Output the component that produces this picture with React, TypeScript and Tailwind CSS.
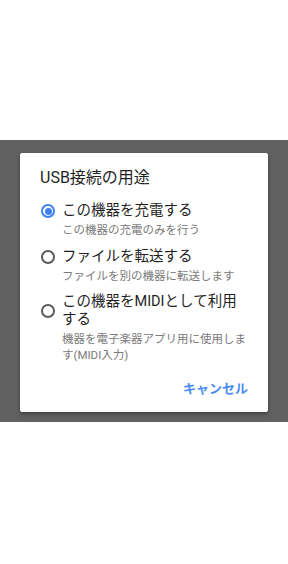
import React from "react";

function Radio({ checked }: { checked?: boolean }) {
  return (
    <div
      className={
        "w-[14px] h-[14px] shrink-0 rounded-full border-2 flex items-center justify-center " +
        (checked ? "border-[#3f7ff0]" : "border-[#5c5c5c]")
      }
    >
      {checked && <div className="w-[7px] h-[7px] rounded-full bg-[#3f7ff0]" />}
    </div>
  );
}

function Option({ checked, title, sub, className }: { checked?: boolean; title: string; sub: string; className?: string }) {
  return (
    <div className={"flex flex-col " + (className ?? "")}>
      <div className="flex items-center gap-[7px] pl-[1px]">
        <Radio checked={checked} />
        <div className="text-[14.5px] leading-[18px] text-[#1f1f1f] pr-[10px]">{title}</div>
      </div>
      <div className="pl-[22px] mt-[2px] text-[11.5px] leading-[16px] text-[#7a7a7a]">{sub}</div>
    </div>
  );
}

export default function App() {
  return (
    <div
      className="w-[288px] h-[564px] bg-white flex flex-col pt-[140px]"
      style={{ fontFamily: "Roboto, 'Noto Sans CJK JP', 'Noto Sans', sans-serif" }}
    >
      <div className="h-[282px] bg-[#616161] px-5 pt-[13px]">
        <div className="bg-white rounded-[2px] shadow-[0_2px_4px_rgba(0,0,0,0.35)] pt-[13px] pb-[15px] pl-5 pr-5 flex flex-col">
          <div className="text-[16px] leading-[24px] text-[#1f1f1f]">USB接続の用途</div>
          <div className="mt-[12px] flex flex-col">
            <Option checked title="この機器を充電する" sub="この機器の充電のみを行う" />
            <Option className="mt-[10px]" title="ファイルを転送する" sub="ファイルを別の機器に転送します" />
            <Option className="mt-[9px]" title="この機器をMIDIとして利用する" sub="機器を電子楽器アプリ用に使用します(MIDI入力)" />
          </div>
          <div className="mt-[18px] flex justify-end">
            <span className="text-[13px] leading-[16px] font-bold text-[#4a8cf5]">キャンセル</span>
          </div>
        </div>
      </div>
    </div>
  );
}
